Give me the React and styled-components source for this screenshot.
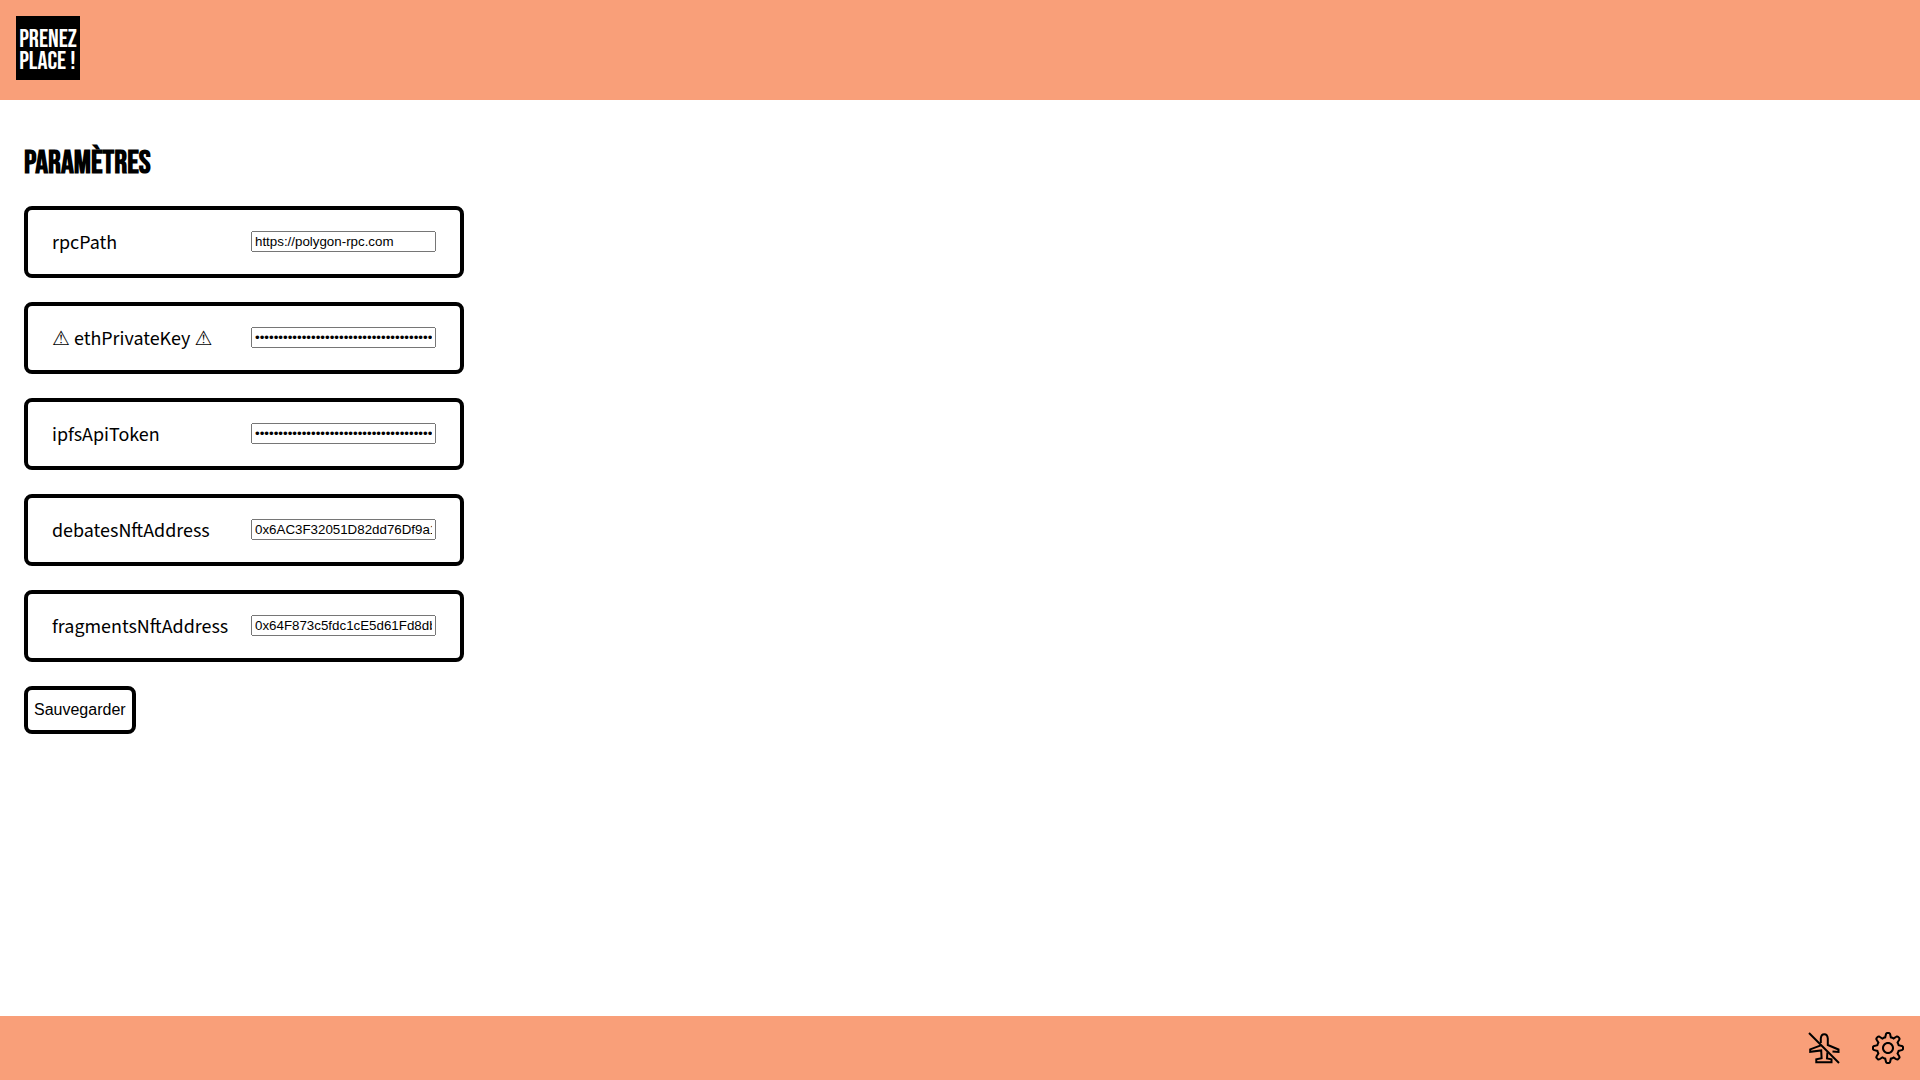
import React from "react";
import styled, { createGlobalStyle } from "styled-components";
import { SlSettings } from "react-icons/sl";

const GlobalStyle = createGlobalStyle`
  * {
    box-sizing: border-box;
  }

  body {
    margin: 0;
    background: #fff;
    color: #000;
    font-family: "Source Sans Pro", "Source Sans 3", "DejaVu Sans", sans-serif;
    font-size: 20px;
    line-height: 24px;
  }
`;

const Page = styled.div`
  display: flex;
  flex-direction: column;
  min-height: 100vh;
`;

const Header = styled.header`
  display: flex;
  align-items: flex-start;
  height: 100px;
  padding: 16px;
  background: #f99f79;
`;

const Logo = styled.a`
  display: grid;
  place-content: center;
  width: 64px;
  height: 64px;
  padding-top: 6px;
  background: #000;
  color: #fff;
  font-family: "Bebas Neue", "Roboto Condensed", sans-serif;
  font-size: 25px;
  line-height: 22px;
  text-decoration: none;
`;

const Main = styled.main`
  flex: 1;
  padding: 44px 24px 24px;
`;

const Title = styled.h1`
  margin: 0 0 22px;
  font-family: "Bebas Neue", "Roboto Condensed", sans-serif;
  font-size: 32px;
  line-height: 40px;
`;

const Form = styled.form`
  display: flex;
  flex-direction: column;
  align-items: flex-start;
  gap: 24px;
`;

const Field = styled.div`
  display: flex;
  align-items: flex-start;
  justify-content: space-between;
  width: 440px;
  max-width: 100%;
  padding: 21px 24px 19px;
  border: 4px solid #000;
  border-radius: 8px;
`;

const Input = styled.input`
  width: 185px;
  height: 21px;
  padding: 1px 2px;
  font-family: "Liberation Sans", Arial, sans-serif;
`;

const SaveButton = styled.button`
  height: 48px;
  padding: 0 6px;
  border: 4px solid #000;
  border-radius: 8px;
  background: #fff;
  color: #000;
  font-family: "Liberation Sans", Arial, sans-serif;
  font-size: 16px;
`;

const Footer = styled.footer`
  display: flex;
  align-items: center;
  justify-content: flex-end;
  gap: 32px;
  height: 64px;
  padding: 0 16px;
  background: #f99f79;
`;

const IconButton = styled.button`
  display: flex;
  padding: 0;
  border: 0;
  background: none;
  color: #000;
  cursor: pointer;

  svg {
    width: 32px;
    height: 32px;
  }
`;

function AirplaneOff() {
  return (
    <svg viewBox="0 0 32 32" fill="none" stroke="currentColor" strokeWidth="2" aria-hidden="true">
      <path d="M1 1 31 31" />
      <path d="M12.8 11V6.5C13 4 14.5 2.2 16.3 2.2S19.6 4 19.8 6.5V13L30.5 17.5V20L24.5 19.4" />
      <path d="M12.8 13.4 2.2 17.4V19.8L13.2 18.4 13.6 26.3 8.3 27.3V30.3H23.5V27.3L19 26.4 19.4 20.4" />
    </svg>
  );
}

const fields = [
  { name: "rpcPath", label: "rpcPath", type: "text", value: "https://polygon-rpc.com" },
  { name: "ethPrivateKey", label: "⚠ ethPrivateKey ⚠", type: "password", value: "0".repeat(64) },
  { name: "ipfsApiToken", label: "ipfsApiToken", type: "password", value: "0".repeat(64) },
  { name: "debatesNftAddress", label: "debatesNftAddress", type: "text", value: "0x6AC3F32051D82dd76Df9a1" },
  { name: "fragmentsNftAddress", label: "fragmentsNftAddress", type: "text", value: "0x64F873c5fdc1cE5d61Fd8db" },
];

export default function App() {
  return (
    <Page>
      <GlobalStyle />
      <Header>
        <Logo href="#">
          <span>PRENEZ</span>
          <span>PLACE !</span>
        </Logo>
      </Header>
      <Main>
        <Title>Paramètres</Title>
        <Form onSubmit={(event) => event.preventDefault()}>
          {fields.map((field) => (
            <Field key={field.name}>
              <label htmlFor={field.name}>{field.label}</label>
              <Input
                id={field.name}
                name={field.name}
                type={field.type}
                defaultValue={field.value}
                autoComplete="off"
              />
            </Field>
          ))}
          <SaveButton type="submit">Sauvegarder</SaveButton>
        </Form>
      </Main>
      <Footer>
        <IconButton type="button" aria-label="Mode hors ligne">
          <AirplaneOff />
        </IconButton>
        <IconButton type="button" aria-label="Paramètres">
          <SlSettings />
        </IconButton>
      </Footer>
    </Page>
  );
}
